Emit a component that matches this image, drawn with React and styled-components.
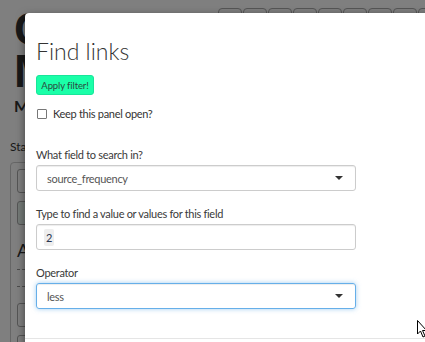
import styled, { createGlobalStyle } from "styled-components";

const GlobalStyle = createGlobalStyle`
  html, body {
    margin: 0;
    padding: 0;
    width: 425px;
    height: 342px;
    overflow: hidden;
    background: #fff;
    font-family: Lato, "Open Sans", sans-serif;
  }
`;

/* ---- page behind the modal ---- */

const Page = styled.div`
  position: relative;
  width: 425px;
  height: 342px;
  overflow: hidden;
  background: #fff;
`;

const Header = styled.div`
  display: flex;
  justify-content: space-between;
  align-items: flex-start;
`;

const Brand = styled.div`
  padding: 8px 0 0 14px;
  display: flex;
  flex-direction: column;
`;

const BigTitle = styled.div`
  font-family: "Liberation Sans", sans-serif;
  font-weight: 700;
  font-size: 46px;
  line-height: 42px;
  color: #333;
  letter-spacing: 2px;
`;

const SubTitle = styled.div`
  font-weight: 700;
  font-size: 16px;
  color: #333;
  margin-top: 4px;
`;

const Toolbar = styled.div`
  display: flex;
  gap: 1px;
  padding: 8px 0 0 0;
  margin-right: -12px;
`;

const ToolButton = styled.div`
  width: 22px;
  height: 22px;
  border: 1px solid #aaa;
  border-radius: 4px;
  background: #fafafa;
`;

const Status = styled.div`
  font-size: 12px;
  color: #333;
  margin: 24px 0 8px 10px;
`;

const SidePanel = styled.div`
  margin-left: 10px;
  width: 120px;
  border: 1px solid #ccc;
  border-radius: 4px;
  padding: 6px 6px;
  display: flex;
  flex-direction: column;
  gap: 8px;
`;

const SideButton = styled.div`
  height: 22px;
  border: 1px solid #aaa;
  border-radius: 3px;
  background: ${(p) => p.$bg || "#fff"};
`;

const SideHeading = styled.div`
  font-size: 18px;
  color: #333;
  margin-top: 6px;
`;

const Dotted = styled.div`
  border-top: 1px dashed #999;
  height: 8px;
`;

/* ---- modal ---- */

const Backdrop = styled.div`
  position: absolute;
  inset: 0;
  background: rgba(0, 0, 0, 0.5);
`;

const Modal = styled.div`
  position: absolute;
  left: 25px;
  top: 13px;
  width: 620px;
  height: 400px;
  background: #fff;
  box-shadow: 0 3px 9px rgba(0, 0, 0, 0.5);
  border-radius: 4px 0 0 0;
`;

const ModalBody = styled.div`
  padding: 23px 11px 0 11px;
  font-size: 11px;
  letter-spacing: -0.3px;
  color: #333;
`;

const Title = styled.h3`
  margin: 0;
  font-family: Lato, sans-serif;
  font-weight: 300;
  font-size: 23px;
  line-height: 30px;
  letter-spacing: 0;
  color: #333;
`;

const ApplyButton = styled.button`
  margin-top: 9px;
  height: 20px;
  width: 58px;
  padding: 0;
  border: 1px solid #19e59a;
  border-radius: 3px;
  background: #1affa8;
  color: #2d4a3e;
  font-family: Lato, sans-serif;
  font-size: 9.5px;
  letter-spacing: -0.1px;
`;

const CheckRow = styled.label`
  display: flex;
  align-items: center;
  gap: 6px;
  margin-top: 12px;
`;

const Box = styled.span`
  width: 8px;
  height: 8px;
  border: 1px solid #777;
  border-radius: 1px;
  margin-left: 1px;
`;

const Form = styled.div`
  margin-top: 27px;
  display: flex;
  flex-direction: column;
  gap: 15px;
  width: 320px;
`;

const Group = styled.div`
  display: flex;
  flex-direction: column;
  gap: 3px;
`;

const Label = styled.div`
  line-height: 15px;
  color: #3a3a3a;
`;

const Control = styled.div`
  height: 26px;
  box-sizing: border-box;
  border: 1px solid ${(p) => (p.$focus ? "#66afe9" : "#ccc")};
  border-radius: 3px;
  box-shadow: ${(p) =>
    p.$focus
      ? "inset 0 1px 1px rgba(0,0,0,.075), 0 0 5px rgba(102,175,233,.6)"
      : "inset 0 1px 1px rgba(0,0,0,.075)"};
  display: flex;
  align-items: center;
  justify-content: space-between;
  padding: 0 12px 0 10px;
  color: #555;
`;

const Chip = styled.span`
  background: #eee;
  border-radius: 2px;
  padding: 2px 2px;
  margin-left: -3px;
  color: #2a3550;
`;

const Caret = styled.span`
  width: 0;
  height: 0;
  border-left: 4px solid transparent;
  border-right: 4px solid transparent;
  border-top: 4px solid #333;
`;

const Footer = styled.div`
  position: absolute;
  left: 0;
  right: 0;
  top: 325px;
  border-top: 1px solid #e5e5e5;
`;

const Pointer = styled.svg`
  position: absolute;
  left: 417px;
  top: 320px;
`;

const toolButtons = Array.from({ length: 9 });

export default function App() {
  return (
    <Page>
      <GlobalStyle />
      <Header>
        <Brand>
          <BigTitle>CAUSAL</BigTitle>
          <BigTitle>MAP</BigTitle>
          <SubTitle>Map</SubTitle>
        </Brand>
        <Toolbar>
          {toolButtons.map((_, i) => (
            <ToolButton key={i} />
          ))}
        </Toolbar>
      </Header>
      <Status>Status</Status>
      <SidePanel>
        <SideButton />
        <SideButton $bg="#e8f4ee" />
        <SideHeading>Add</SideHeading>
        <Dotted />
        <Dotted />
        <SideButton />
        <SideButton />
        <SideButton />
      </SidePanel>

      <Backdrop />
      <Modal>
        <ModalBody>
          <Title>Find links</Title>
          <ApplyButton>Apply filter!</ApplyButton>
          <CheckRow>
            <Box />
            Keep this panel open?
          </CheckRow>
          <Form>
            <Group>
              <Label>What field to search in?</Label>
              <Control>
                source_frequency
                <Caret />
              </Control>
            </Group>
            <Group>
              <Label>Type to find a value or values for this field</Label>
              <Control>
                <Chip>2</Chip>
              </Control>
            </Group>
            <Group>
              <Label>Operator</Label>
              <Control $focus>
                less
                <Caret />
              </Control>
            </Group>
          </Form>
        </ModalBody>
        <Footer />
      </Modal>
      <Pointer width="10" height="18" viewBox="0 0 10 18">
        <path d="M0.5 0.5 L0.5 14 L3.5 11 L6 17 L8 16 L5.5 10.5 L9.5 10.5 Z" fill="#fff" stroke="#000" strokeWidth="1" />
      </Pointer>
    </Page>
  );
}
